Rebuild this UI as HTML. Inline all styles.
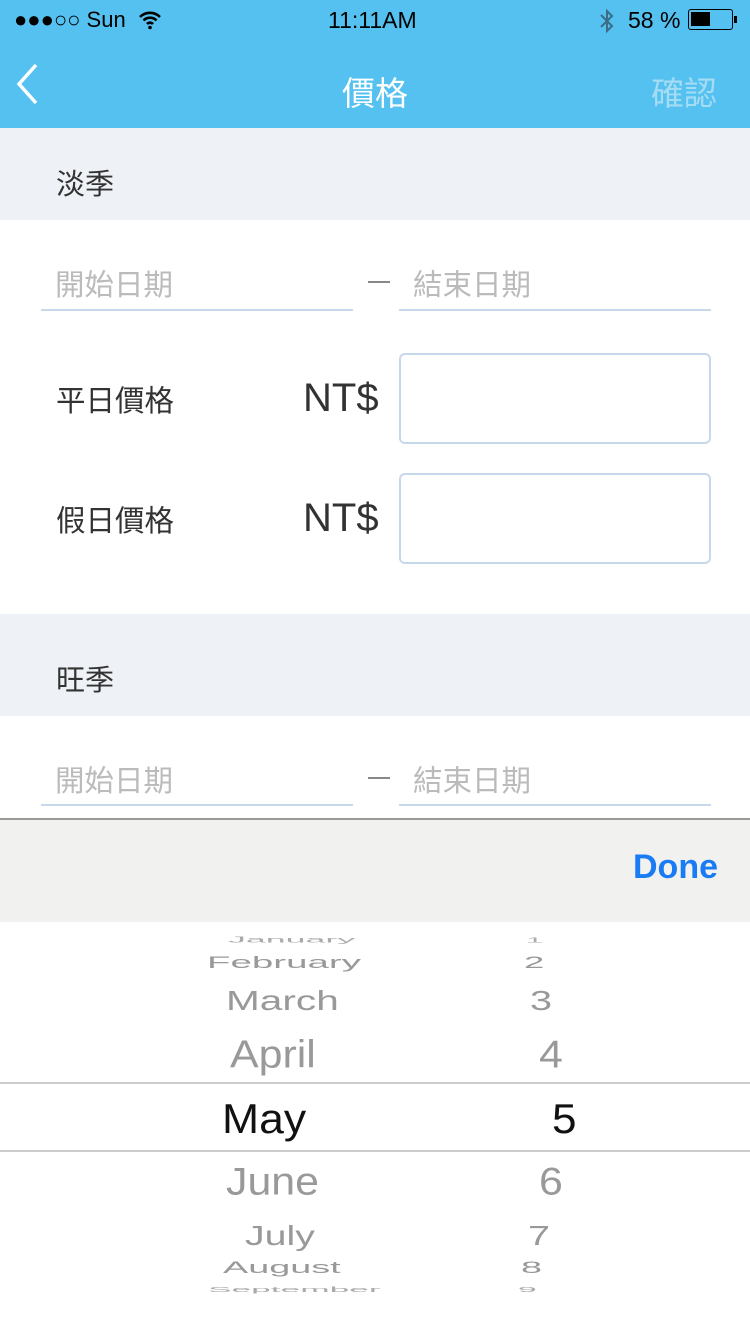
<!DOCTYPE html>
<html><head><meta charset="utf-8"><style>
*{margin:0;padding:0;box-sizing:border-box}
body{width:750px;height:1334px;position:relative;overflow:hidden;background:#fff;font-family:"Liberation Sans","Noto Sans CJK TC",sans-serif}
.a{position:absolute}
.cj{font-family:"Liberation Sans","Noto Sans CJK TC",sans-serif}
.line{position:absolute;height:2px;background:#c8d8ec}
.box{position:absolute;border:2px solid #c8d8ec;border-radius:6px;background:#fff}
.pk{position:absolute;white-space:nowrap;transform-origin:left center;line-height:1}
</style></head><body>
<div class="a" style="left:0;top:0;width:750px;height:128px;background:#55c1f0"></div>
<div class="a" style="left:14px;top:7px;font-size:22px;color:#000">●●●○○ Sun</div>
<svg class="a" style="left:138px;top:10px" width="24" height="20" viewBox="0 0 24 20"><path d="M2 7a14 14 0 0 1 20 0M5.5 10.5a9 9 0 0 1 13 0M9 14a4 4 0 0 1 6 0" stroke="#000" stroke-width="2.6" fill="none"/><circle cx="12" cy="17.5" r="1.8"/></svg>
<div class="a" style="left:328px;top:7px;font-size:23px;color:#000">11:11AM</div>
<svg class="a" style="left:598px;top:8px" width="18" height="26" viewBox="0 0 18 26"><path d="M3 7l11 11-5 5V3l5 5L3 19" stroke="#3a6d86" stroke-width="2" fill="none"/></svg>
<div class="a" style="left:628px;top:7px;font-size:23px;color:#000">58 %</div>
<div class="a" style="left:688px;top:9px;width:45px;height:21px;border:1.5px solid #000;border-radius:3px"><div style="margin:2px;width:19px;height:14px;background:#000"></div></div>
<div class="a" style="left:734px;top:16px;width:3px;height:7px;background:#000"></div>
<svg class="a" style="left:14px;top:62px" width="28" height="44" viewBox="0 0 28 44"><path d="M22 3L5 22l17 19" stroke="#fff" stroke-width="3.5" fill="none"/></svg>
<div class="a cj" style="left:0;width:750px;text-align:center;top:67px;font-size:33px;color:#fff">價格</div>
<div class="a cj" style="left:651px;top:67px;font-size:33px;color:#a4dcf4">確認</div>

<div class="a" style="left:0;top:128px;width:750px;height:92px;background:#eef1f5"></div>
<div class="a cj" style="left:56px;top:161px;font-size:29px;color:#333">淡季</div>
<div class="a cj" style="left:55px;top:262px;font-size:29.5px;color:#bbb">開始日期</div>
<div class="line" style="left:41px;top:309px;width:312px"></div>
<div class="a" style="left:368px;top:281px;width:22px;height:2px;background:#888"></div>
<div class="a cj" style="left:413px;top:262px;font-size:29.5px;color:#bbb">結束日期</div>
<div class="line" style="left:399px;top:309px;width:312px"></div>
<div class="a cj" style="left:56px;top:378px;font-size:29.5px;color:#333">平日價格</div>
<div class="a" style="left:303px;top:376px;font-size:40px;color:#333">NT$</div>
<div class="box" style="left:399px;top:353px;width:312px;height:91px"></div>
<div class="a cj" style="left:56px;top:498px;font-size:29.5px;color:#333">假日價格</div>
<div class="a" style="left:303px;top:496px;font-size:40px;color:#333">NT$</div>
<div class="box" style="left:399px;top:473px;width:312px;height:91px"></div>

<div class="a" style="left:0;top:614px;width:750px;height:102px;background:#eef1f5"></div>
<div class="a cj" style="left:56px;top:657px;font-size:29px;color:#333">旺季</div>
<div class="a cj" style="left:55px;top:758px;font-size:29.5px;color:#bbb">開始日期</div>
<div class="line" style="left:41px;top:804px;width:312px"></div>
<div class="a" style="left:368px;top:777px;width:22px;height:2px;background:#888"></div>
<div class="a cj" style="left:413px;top:758px;font-size:29.5px;color:#bbb">結束日期</div>
<div class="line" style="left:399px;top:804px;width:312px"></div>

<div class="a" style="left:0;top:818px;width:750px;height:104px;background:#f1f1f0;border-top:2px solid #999"></div>
<div class="a" style="left:633px;top:848px;font-size:34px;font-weight:bold;color:#1a7cf5">Done</div>
<div class="a" style="left:0;top:1082px;width:750px;height:2px;background:#ccc"></div>
<div class="a" style="left:0;top:1150px;width:750px;height:2px;background:#ccc"></div>

<div class="pk" style="left:228px;top:940px;font-size:24px;color:#aaa;transform:translateY(-50%) scale(1.49,.35)">January</div>
<div class="pk" style="left:207px;top:962px;font-size:26px;color:#999;transform:translateY(-50%) scale(1.48,.65)">February</div>
<div class="pk" style="left:226px;top:1000px;font-size:33px;color:#999;transform:translateY(-50%) scale(1.23,.85)">March</div>
<div class="pk" style="left:230px;top:1055px;font-size:39px;color:#999;transform:translateY(-50%) scaleX(1.1)">April</div>
<div class="pk" style="left:222px;top:1119px;font-size:42px;color:#111;transform:translateY(-50%) scaleX(1.06)">May</div>
<div class="pk" style="left:226px;top:1182px;font-size:39px;color:#999;transform:translateY(-50%) scaleX(1.1)">June</div>
<div class="pk" style="left:245px;top:1235px;font-size:33px;color:#999;transform:translateY(-50%) scale(1.19,.85)">July</div>
<div class="pk" style="left:223px;top:1268px;font-size:27px;color:#999;transform:translateY(-50%) scale(1.4,.6)">August</div>
<div class="pk" style="left:208px;top:1290px;font-size:24px;color:#aaa;transform:translateY(-50%) scale(1.47,.3)">September</div>

<div class="pk" style="left:526px;top:940px;font-size:22px;color:#aaa;transform:translateY(-50%) scale(1.4,.35)">1</div>
<div class="pk" style="left:524px;top:962px;font-size:26px;color:#999;transform:translateY(-50%) scale(1.4,.65)">2</div>
<div class="pk" style="left:530px;top:1000px;font-size:33px;color:#999;transform:translateY(-50%) scale(1.2,.85)">3</div>
<div class="pk" style="left:539px;top:1055px;font-size:39px;color:#999;transform:translateY(-50%) scaleX(1.1)">4</div>
<div class="pk" style="left:552px;top:1119px;font-size:42px;color:#111;transform:translateY(-50%) scaleX(1.05)">5</div>
<div class="pk" style="left:539px;top:1182px;font-size:39px;color:#999;transform:translateY(-50%) scaleX(1.1)">6</div>
<div class="pk" style="left:528px;top:1235px;font-size:33px;color:#999;transform:translateY(-50%) scale(1.2,.85)">7</div>
<div class="pk" style="left:521px;top:1268px;font-size:27px;color:#999;transform:translateY(-50%) scale(1.4,.6)">8</div>
<div class="pk" style="left:518px;top:1290px;font-size:24px;color:#aaa;transform:translateY(-50%) scale(1.4,.3)">9</div>
</body></html>
